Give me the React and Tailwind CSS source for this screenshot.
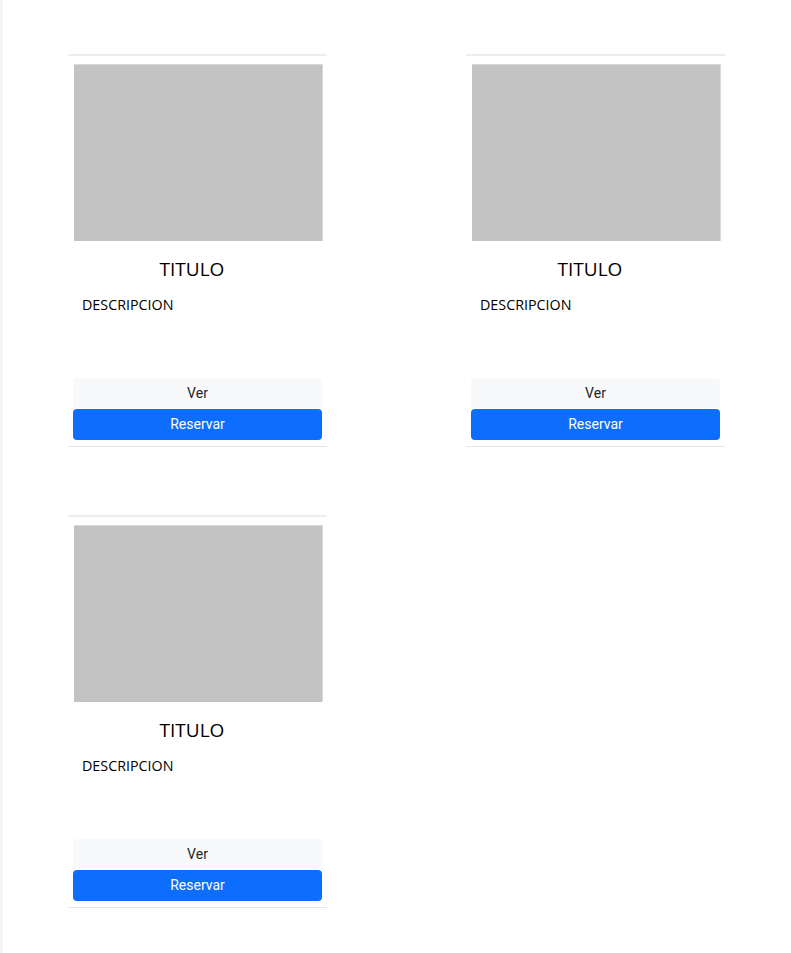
import React from 'react'

const cards = [1, 2, 3]

function Card() {
  return (
    <div className="w-[259px] border-t-2 border-b border-t-[#ededed] border-b-[#e6e6e6] pt-[8px] pb-[6px]">
      <div className="ml-[6px] h-[177px] w-[249px] bg-[#c3c3c3] border-t border-r border-[#d9d9d9]" />
      <h5 className="mt-[13px] pr-[11px] text-center text-[19px] leading-[30px] text-black font-['Open_Sans',sans-serif]">
        TITULO
      </h5>
      <p className="mt-[10px] pl-[14px] h-[84px] text-[14.3px] leading-[22px] text-black font-['Open_Sans',sans-serif]">
        DESCRIPCION
      </p>
      <div className="ml-[5px] w-[249px] flex flex-col font-['Roboto',sans-serif] text-[14px]">
        <button className="h-[30px] bg-[#f8f9fa] text-[#212529] rounded-t-[4px]">Ver</button>
        <button className="mt-px h-[31px] bg-[#0d6efd] text-white rounded-[4px]">Reservar</button>
      </div>
    </div>
  )
}

export default function App() {
  return (
    <div className="min-h-[953px] bg-white border-l-[3px] border-[#f4f4f4]">
      <div className="pt-[54px] pl-[65px] grid grid-cols-[259px_259px] gap-x-[139px] gap-y-[68px]">
        {cards.map((c) => (
          <Card key={c} />
        ))}
      </div>
    </div>
  )
}
